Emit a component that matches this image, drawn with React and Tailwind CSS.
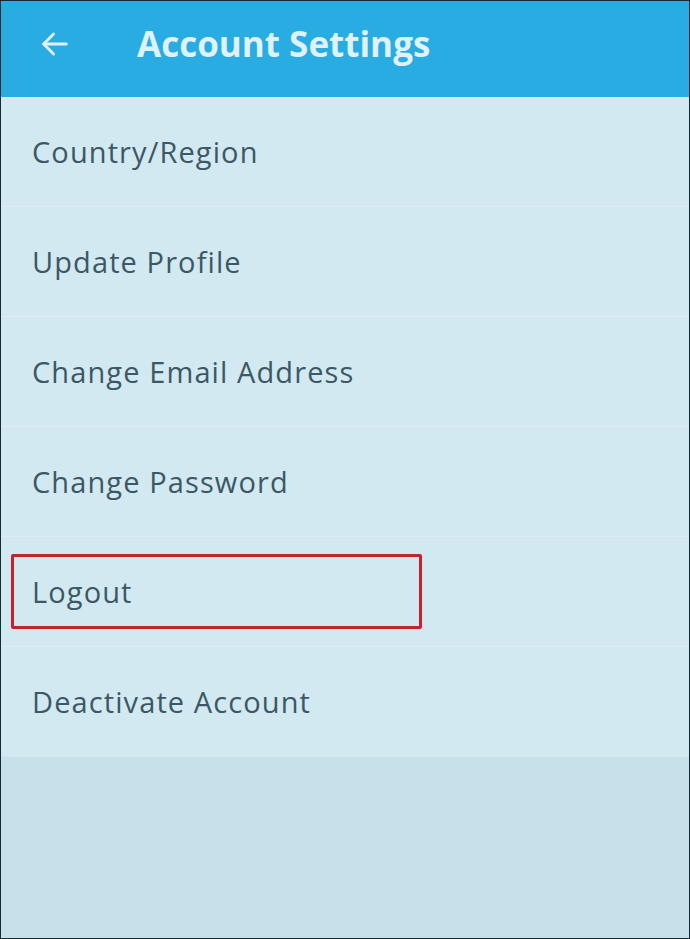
const items = [
  "Country/Region",
  "Update Profile",
  "Change Email Address",
  "Change Password",
  "Logout",
  "Deactivate Account",
];

const App = () => {
  return (
    <div
      className="w-[690px] h-[939px] flex flex-col border border-[#132a38] bg-[#c8e0ea] overflow-hidden"
      style={{ fontFamily: "'Open Sans', Lato, sans-serif" }}
    >
      <header className="h-[96px] shrink-0 flex items-center pb-[11px] bg-[#29ace1] text-[#dff2fa]">
        <svg
          className="ml-[37px] w-[34px] h-[34px]"
          viewBox="0 0 24 24"
          fill="none"
          stroke="currentColor"
          strokeWidth="2"
          strokeLinecap="round"
          strokeLinejoin="round"
        >
          <path d="M20 12H4" />
          <path d="M11 5l-7 7 7 7" />
        </svg>
        <h1 className="ml-[65px] text-[35px] leading-none font-bold">
          Account Settings
        </h1>
      </header>

      <ul className="flex flex-col bg-[#d3e9f1]">
        {items.map((label) => (
          <li
            key={label}
            className="h-[110px] flex items-center px-[10px] border-b border-[#dcedf3] last:border-0"
          >
            <div
              className={
                label === "Logout"
                  ? "w-[411px] h-[75px] flex items-center pl-[18px] rounded-[2px] border-[3px] border-[#c3222f]"
                  : "w-[411px] h-[75px] flex items-center pl-[21px]"
              }
            >
              <span className="text-[29px] tracking-[1.1px] text-[#3b5864]">
                {label}
              </span>
            </div>
          </li>
        ))}
      </ul>

      <div className="flex-1 bg-[#c8e0ea]" />
    </div>
  );
};

export default App;
